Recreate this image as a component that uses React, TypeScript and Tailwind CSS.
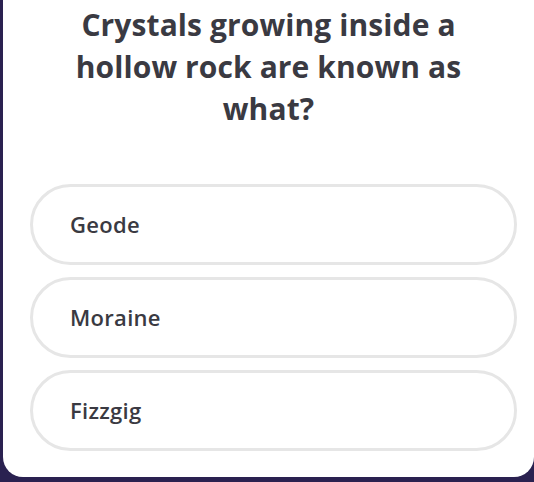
export default function App() {
  const options = ["Geode", "Moraine", "Fizzgig"];
  return (
    <div className="h-[482px] w-[534px] overflow-hidden bg-[#2a2150]">
      <div className="ml-[3px] flex h-[477px] flex-col rounded-b-[20px] bg-white" style={{ fontFamily: "'Open Sans', sans-serif" }}>
        <h1 className="mx-auto mt-[4px] w-[440px] text-center text-[30px] font-bold leading-[42px] tracking-[0.1px] text-[#3a3a42]">
          Crystals growing inside a hollow rock are known as what?
        </h1>
        <div className="mt-[54px] flex flex-col gap-[12px] pl-[27px] pr-[17px]">
          {options.map((o) => (
            <div
              key={o}
              className="flex h-[81px] items-center rounded-full border-[3px] border-[#e6e6e6] pl-[37px] text-[22px] font-semibold tracking-[0.3px] text-[#3a3a42]"
            >
              {o}
            </div>
          ))}
        </div>
      </div>
    </div>
  );
}
